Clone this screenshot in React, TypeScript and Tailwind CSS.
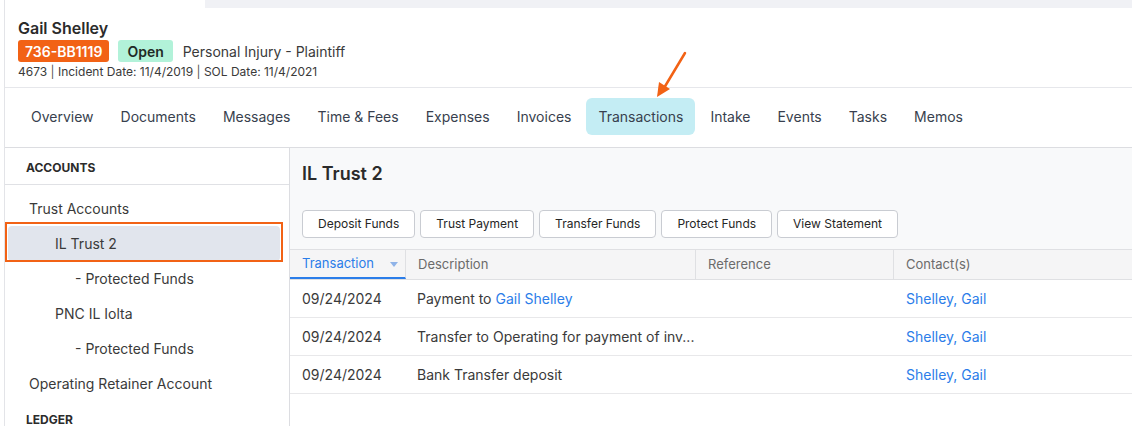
import React from "react";

const tabs = [
  "Overview",
  "Documents",
  "Messages",
  "Time & Fees",
  "Expenses",
  "Invoices",
  "Transactions",
  "Intake",
  "Events",
  "Tasks",
  "Memos",
];

const actions = ["Deposit Funds", "Trust Payment", "Transfer Funds", "Protect Funds", "View Statement"];

const rows = [
  { date: "09/24/2024", desc: "Payment to ", link: "Gail Shelley", contact: "Shelley, Gail" },
  { date: "09/24/2024", desc: "Transfer to Operating for payment of inv...", link: "", contact: "Shelley, Gail" },
  { date: "09/24/2024", desc: "Bank Transfer deposit", link: "", contact: "Shelley, Gail" },
];

function SideItem({ label, indent, selected }: { label: string; indent: string; selected?: boolean }) {
  if (selected) {
    return (
      <div className="relative ml-[3px] mr-[9px]">
        <div className={`h-[35px] flex items-center rounded-sm bg-[#e1e5ed] ${indent}`}>{label}</div>
        <div className="absolute -top-[4px] -bottom-[1px] -left-[3px] -right-[3px] border-2 border-[#f26215] pointer-events-none" />
      </div>
    );
  }
  return <div className={`h-[35px] flex items-center ${indent}`}>{label}</div>;
}

export default function App() {
  return (
    <div className="relative w-[1132px] h-[426px] overflow-hidden bg-white pl-[4px]" style={{ fontFamily: "Inter, 'Noto Sans', sans-serif" }}>
      <div className="h-full border-l border-[#e3e4e8] flex flex-col">
        {/* top strip */}
        <div className="flex h-[8px] shrink-0">
          <div className="w-[200px]" />
          <div className="flex-1 bg-[#f0f1f5]" />
        </div>

        {/* matter header */}
        <div className="pl-[13px] pt-[9px] pb-[7px] border-b border-[#e6e7eb]">
          <div className="text-[16px] leading-[23px] font-semibold text-[#2b2b2b]">Gail Shelley</div>
          <div className="flex items-center h-[22px]">
            <span className="h-[22px] px-[7px] flex items-center rounded-[3px] bg-[#f26215] text-white text-[14px] font-semibold">736-BB1119</span>
            <span className="ml-[9px] h-[22px] px-[9px] flex items-center rounded-[3px] bg-[#b2f2d9] text-[#1f2a26] text-[14px] font-semibold">Open</span>
            <span className="ml-[10px] text-[14px] text-[#3a3a3a]">Personal Injury - Plaintiff</span>
          </div>
          <div className="text-[12px] leading-[16px] text-[#3a3a3a] mt-[2px]">
            4673 <span className="text-[#555]">|</span> Incident Date: 11/4/2019 <span className="text-[#555]">|</span> SOL Date: 11/4/2021
          </div>
        </div>

        {/* tabs */}
        <div className="flex items-center gap-[3px] pl-[14px] pt-[10px] pb-[12px] border-b border-[#dcdde1]">
          {tabs.map((t) => (
            <div
              key={t}
              className={`h-[37px] px-[12px] flex items-center rounded-[6px] text-[14px] text-[#383f4e] ${
                t === "Transactions" ? "bg-[#c4edf4]" : ""
              }`}
            >
              {t}
            </div>
          ))}
        </div>

        {/* body */}
        <div className="flex flex-1 min-h-0">
          <div className="w-[285px] shrink-0 border-r border-[#dcdde1] text-[14px] text-[#3a3a3a]">
            <div className="h-[37px] flex items-center pl-[21px] pt-[3px] border-b border-[#e0e1e5] text-[12px] font-bold text-[#2b2b2b]">ACCOUNTS</div>
            <div className="pt-[6px]">
              <SideItem label="Trust Accounts" indent="pl-[24px]" />
              <SideItem label="IL Trust 2" indent="pl-[47px]" selected />
              <SideItem label="- Protected Funds" indent="pl-[70px]" />
              <SideItem label="PNC IL Iolta" indent="pl-[50px]" />
              <SideItem label="- Protected Funds" indent="pl-[70px]" />
              <SideItem label="Operating Retainer Account" indent="pl-[24px]" />
              <div className="h-[38px] flex items-center pl-[21px] text-[12px] font-bold text-[#2b2b2b]">LEDGER</div>
            </div>
          </div>

          <div className="flex-1 min-w-0 flex flex-col">
            <div className="bg-[#f8f9fa] px-[12px] pt-[14px] pb-[11px]">
              <div className="text-[18px] leading-[24px] font-semibold text-[#2b2b2b]">IL Trust 2</div>
              <div className="flex gap-[5px] mt-[24px]">
                {actions.map((a) => (
                  <button
                    key={a}
                    className="h-[28px] px-[15px] bg-white border border-[#c9ccd2] rounded-[4px] text-[12px] text-[#262626]"
                  >
                    {a}
                  </button>
                ))}
              </div>
            </div>

            <div className="flex h-[31px] bg-[#f5f5f6] border-y border-[#dfe0e3] text-[13px] text-[#6b6b6b]">
              <div className="w-[116px] flex items-center justify-between pl-[12px] pr-[7px] pt-[1px] border-r border-[#dfe0e3] border-b-2 border-b-[#2b7de9] text-[#2b7de9]">
                Transaction
                <svg width="8" height="5" viewBox="0 0 8 5">
                  <path d="M0 0h8L4 5z" fill="#8fb3e8" />
                </svg>
              </div>
              <div className="w-[290px] flex items-center pl-[12px] border-r border-[#dfe0e3]">Description</div>
              <div className="w-[198px] flex items-center pl-[12px] border-r border-[#dfe0e3]">Reference</div>
              <div className="flex-1 flex items-center pl-[12px]">Contact(s)</div>
            </div>

            {rows.map((r, i) => (
              <div key={i} className="flex h-[38px] border-b border-[#e8e8ea] text-[14px] text-[#3a3a3a]">
                <div className="w-[116px] flex items-center pl-[12px]">{r.date}</div>
                <div className="w-[290px] flex items-center pl-[11px] whitespace-nowrap">
                  {r.desc}
                  {r.link && <span className="ml-[4px] text-[#2b7de9]">{r.link}</span>}
                </div>
                <div className="w-[198px]" />
                <div className="flex-1 flex items-center pl-[12px] text-[#2b7de9]">{r.contact}</div>
              </div>
            ))}
          </div>
        </div>
      </div>

      {/* annotation arrow */}
      <svg className="absolute left-0 top-0 pointer-events-none" width="1132" height="426">
        <line x1="685" y1="53" x2="664" y2="88" stroke="#f26215" strokeWidth="2.5" strokeLinecap="round" />
        <path d="M657 97 L659 82 L670 89 Z" fill="#f26215" />
      </svg>
    </div>
  );
}
